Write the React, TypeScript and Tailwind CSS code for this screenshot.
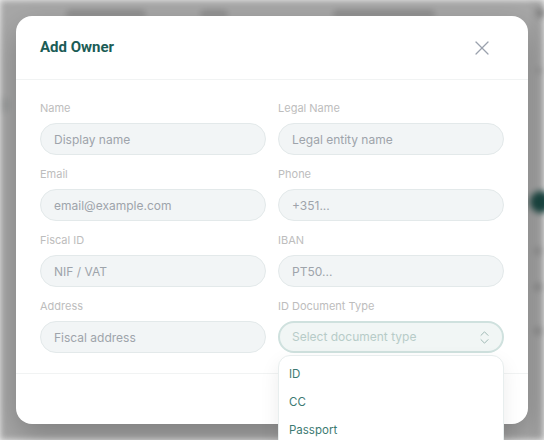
import { X, ChevronsUpDown } from 'lucide-react'

const fields = [
  { label: 'Name', placeholder: 'Display name' },
  { label: 'Legal Name', placeholder: 'Legal entity name' },
  { label: 'Email', placeholder: 'email@example.com' },
  { label: 'Phone', placeholder: '+351...' },
  { label: 'Fiscal ID', placeholder: 'NIF / VAT' },
  { label: 'IBAN', placeholder: 'PT50...' },
  { label: 'Address', placeholder: 'Fiscal address' },
]

const docTypes = ['ID', 'CC', 'Passport']

function Field({ label, placeholder }: { label: string; placeholder: string }) {
  return (
    <div className="flex flex-col gap-[7px]">
      <span className="text-[11px] leading-4 text-[#bdbdbd]">{label}</span>
      <input
        placeholder={placeholder}
        className="h-8 w-full rounded-full border border-[#e3e9ea] bg-[#f2f5f6] px-[13px] text-[12px] text-gray-700 outline-none placeholder:text-[#9ea4ab]"
      />
    </div>
  )
}

function Backdrop() {
  return (
    <div className="flex h-full w-full bg-[#b2b2b2] blur-[3px]">
      <div className="flex flex-1 flex-col">
        <div className="flex items-center pt-[10px]">
          <span className="ml-[66px] h-[8px] w-[80px] rounded bg-[#959595]" />
          <span className="ml-[54px] h-[8px] w-[28px] rounded bg-[#979797]" />
          <span className="ml-[105px] h-[8px] w-[102px] rounded bg-[#959595]" />
        </div>
        <div className="mt-[80px] h-[14px] w-[10px] bg-[#a4a6a6]" />
      </div>
      <div className="flex w-[14px] flex-col items-start bg-[#acacac] pt-[8px]">
        <span className="ml-[6px] h-[10px] w-[10px] rounded-full bg-[#858585]" />
        <span className="ml-[6px] mt-[50px] h-[5px] w-[8px] rounded bg-[#959595]" />
        <span className="mt-[118px] h-[22px] w-[22px] rounded-full bg-[#1c4a45]" />
        <span className="ml-[4px] mt-[34px] h-[8px] w-[10px] rounded bg-[#979797]" />
        <span className="ml-[4px] mt-[28px] h-[8px] w-[10px] rounded bg-[#939393]" />
        <span className="ml-[4px] mt-[36px] h-[8px] w-[10px] rounded bg-[#939393]" />
      </div>
    </div>
  )
}

export default function App() {
  return (
    <div className="relative h-[440px] w-full overflow-hidden font-['Inter',_sans-serif]">
      <Backdrop />
      <div className="absolute inset-0 bg-black/5 p-4">
        <div className="w-[512px] rounded-2xl bg-white shadow-[0_12px_32px_rgba(0,0,0,0.25)]">
          <div className="flex h-16 items-center justify-between border-b border-[#f1f3f3] pl-6 pr-[34px]">
            <h2 className="font-['Roboto',_sans-serif] text-[15px] font-bold text-[#1b5c56]">Add Owner</h2>
            <X size={24} strokeWidth={1.2} className="text-[#9aa1ad]" />
          </div>

          <div className="grid grid-cols-2 gap-x-3 gap-y-[11px] border-b border-[#f1f3f3] px-6 pb-5 pt-5">
            {fields.map((f) => (
              <Field key={f.label} label={f.label} placeholder={f.placeholder} />
            ))}
            <div className="relative flex flex-col gap-[7px]">
              <span className="text-[11px] leading-4 text-[#bdbdbd]">ID Document Type</span>
              <div className="flex h-8 items-center justify-between rounded-full border-2 border-[#cfe1de] bg-[#f1f6f5] pl-3 pr-[9px]">
                <span className="text-[12px] text-[#b7ccc8]">Select document type</span>
                <ChevronsUpDown size={17} strokeWidth={1.3} className="text-[#97b3ae]" />
              </div>
              <div className="absolute left-0 right-0 top-[57px] z-10 rounded-xl border border-[#e8eeee] bg-white pb-2 pt-[5px] shadow-[0_8px_20px_rgba(0,0,0,0.08)]">
                {docTypes.map((t) => (
                  <div key={t} className="flex h-7 items-center px-2.5 text-[11.5px] text-[#3c7a72]">
                    {t}
                  </div>
                ))}
              </div>
            </div>
          </div>

          <div className="h-[50px]" />
        </div>
      </div>
    </div>
  )
}
